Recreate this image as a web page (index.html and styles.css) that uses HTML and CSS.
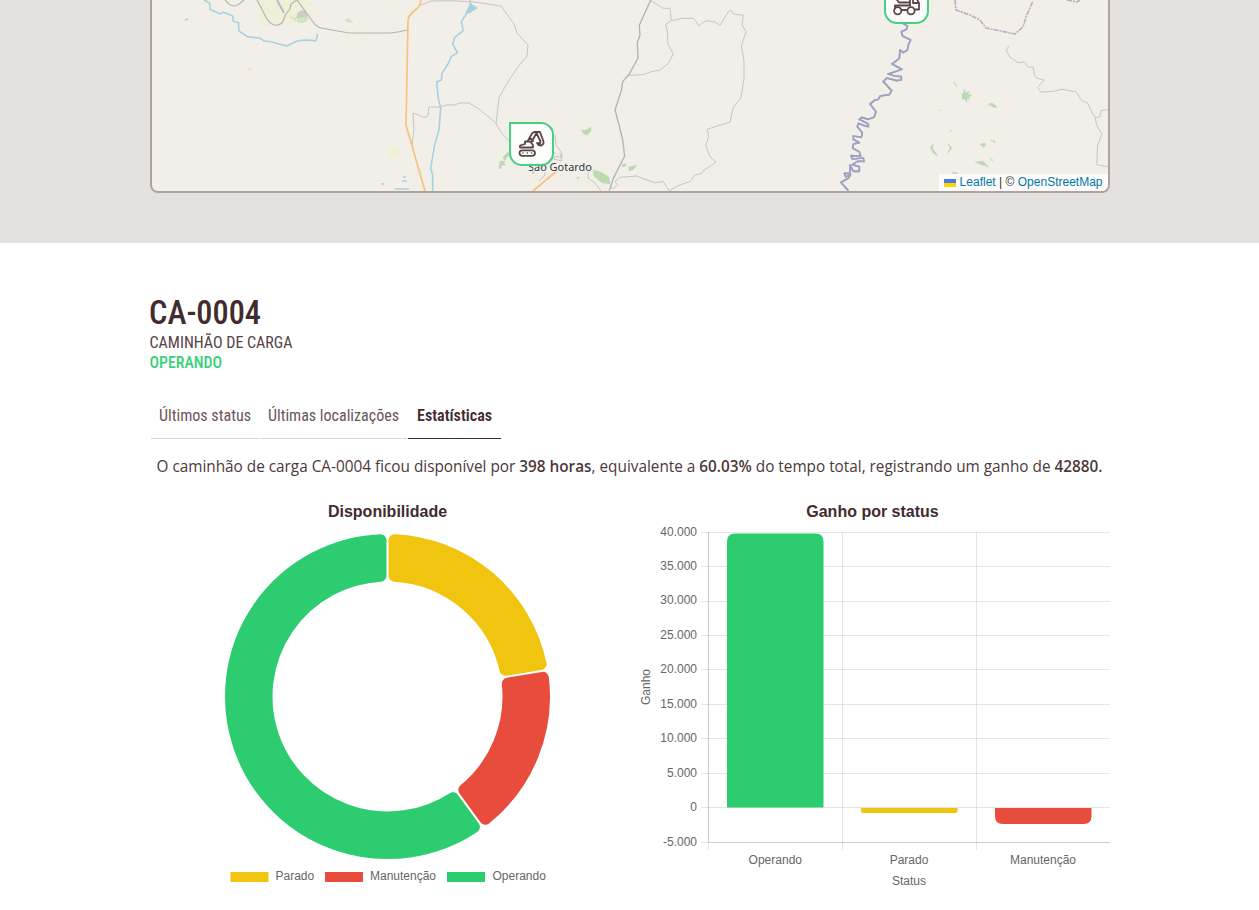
FILE: index.html
```
<!DOCTYPE html>
<html lang="pt-BR">
<head>
<meta charset="utf-8">
<title>CA-0004</title>
<link rel="stylesheet" href="styles.css">
</head>
<body>
<section class="map-section">
  <div class="map">
    <svg class="map-canvas" viewBox="152 0 956 191" width="956" height="191">
      <g class="farm">
        <path d="M258 0l2 18 0 9 8 0 4-8 6 6 13-1 4-6 7 2-2-6 12 4 0-7-4-2 3-9z"/>
        <path d="M341 35h8l5 2-7 2zM358 22l9 0-6 5zM358 33l6 4 4 5-7-2zM383 0h6v2zM308 25l5 1-2 4z"/><circle cx="394" cy="153" r="6"/>
      </g>
      <path class="grey-area" d="M296 18l2-6 5-2 4 4 0 4-8 1z"/>
      <g class="forest light"><path d="M297 18l5-1 6 1-1 3-5 2-4-1zM290 15l2 4 3-2 1 5M345 20l4-1 4 3-6 0z"/></g>
      <path class="peach" d="M248 67l4 2-1 2-2 0zM309 3l3 1-1 2zM275 9l2 2-3 0zM288 5l2-1 0 3z"/>
      <g class="forest">
        <path d="M581 130l5 0 5-3 0 4-4 4-3-1zM503 157l5-5 2 3-4 3 0 2-2 0zM500 161l5 0-1 3 2 1-4 0-1 4-2-1zM593 170l8 2 8 5 1 7-8-1-8-7zM622 165l3-2 1 3-4 1zM629 167l8-2-4 5-4 1zM576 178l3-1 0 2z"/>
        <path d="M953 82l3 2 1 3-2-3zM962 94l2-2 0-3 2 4 3-2-1 3 4 1-3 2 0 3-2-2 0 4-3-3-2 0 0-2zM988 104l4-1 4 3 1 2-4-1zM930 147l3-3 0 5 5 7-5-3zM948 144l4 4-4 5 2-5zM980 144l5-1 1 3-3 1zM991 140l4 1 0 2zM975 162l8-1 6 6-7-2zM990 158l3 2-1 1zM952 172l6 1-4 2zM939 110l2 0-1 1zM950 130l2 1-2 0z"/>
      </g>
      <g class="road">
        <path class="dark" d="M225 0c3 4 5 6 9 6s6-3 10-6M257 0l10 19q7 10 15 4l4-9 4-5 1-5 6-4M297 0l16 22q4 5 8 6l28 5h42q8-1 16-3"/>
        <path d="M421 5l10-4q20-1 43 1l27 4 13 18 3 9 11 12-1 11q-16 18-28 42l-3 26q5 10 14 18M413 113l6 2q5 4 9 1l1-9 10 0 8-2q8 1 13-2l9 0 10 6 17 14M413 113l1 16-2 17M555 135l1 10 6 8 0 5-5-2-7 4M560 153l2 8-8-2M545 169v6l-6 6M588 171l0 7 7 5 6 8M538 138l18 16"/>
        <g class="detail" transform="translate(400 0) scale(.33333)">
          <path d="M752 2L790 25 810 25 814 62 848 55 880 55 888 63 895 78 918 62 945 66 960 76 985 35 992 30 1000 42 1030 46 1026 75 1038 95 1024 138 1032 180 1032 238 1022 295 1000 322 990 366 940 382 922 388 926 410 917 436 930 470 948 486 935 496 912 510 905 520 885 525 870 545 840 555 825 562 808 573 790 545 765 548 735 538 710 528 660 532 645 545 654 555 638 566 630 560M814 62L797 72 803 100 803 130 820 162 805 190 780 210 755 215 728 224 686 226"/>
          <path class="dark" d="M752 0L718 76 720 106 712 128 714 174 688 222 668 245 664 272 645 330 658 378 668 420 674 468 640 535 628 572"/>
        </g>
        <g class="detail" transform="translate(800 0) scale(.33333)">
          <path d="M627 137L619 150 630 172 655 188 675 186 682 200 700 202 703 225 712 235 733 240 713 262 722 276 760 274 785 268 828 275 845 302 862 308 880 345 888 353 900 350 903 332 926 328M885 350L890 375 906 402 893 435 890 494 926 501"/>
        </g>
      </g>
      <path class="motorway" d="M558 170L533 191M421-2q0 9-7 13-6 5-6 10l-2 104 19 66"/>
      <g class="river">
        <g class="detail" transform="translate(140 0) scale(.33333)"><path d="M192 0L210 10 210 28 240 42 250 36 278 48 280 64 296 68 296 92 322 110 362 115 370 122 395 126 440 138 470 124 490 120 528 122 533 102"/></g>
        <g class="detail" transform="translate(400 0) scale(.33333)"><path d="M210 0L212 15 200 40 184 65 190 92 164 112 158 132 172 158 154 170 144 192 126 220 124 240 110 246 115 295 122 325 117 388 103 440 92 505 98 525 98 573"/></g>
        <path d="M185 20l3-1M381 184h3M395 189h14M403 177h3M402 181h5M151 174v6M537 170l-5 3"/>
        <path class="water" d="M470 3l8 5-8 5-5 1z"/>
      </g>
      <g class="winding" transform="translate(800 0) scale(.33333)">
        <path class="glow" id="meander" d="M300 45L308 70 322 78 320 88 304 95 308 108 332 120 326 132 322 150 310 158 300 150 298 175 276 192 300 205 306 208 285 215 264 222 285 228 304 230 304 240 290 242 260 234 250 245 275 272 268 284 240 288 235 298 225 300 210 312 228 335 222 352 205 358 185 352 178 358 205 372 205 380 190 376 175 370 172 380 187 398 184 412 160 408 160 418 178 428 160 432 158 445 178 455 182 468 153 467 157 477 190 474 192 484 172 484 157 494 178 500 178 514 160 514 150 495 150 520 133 520 137 530 152 524 145 535 123 547 145 572"/>
        <use class="core" href="#meander"/>
      </g>
      <path class="boundary" d="M955 0l1 10 14 5 10 5 6 8 15 3 14 3 8-7 3-10 7-16M1067 0l10 2 3-2"/>
      <path class="runway" d="M277 0l7 13"/>
      <text class="city" x="528" y="171" textLength="64">São Gotardo</text>
    </svg>
    <div class="marker excavator">
      <svg viewBox="0 0 28 28" width="28" height="28">
        <path d="M2 17.500v-2l5-1.500V11.500h5l3 3.500v2.500zM9.500 11.500L14 3.500l2-1.500h6l3.500 9.500v2l-2 2-3-.5-1.500-2 3 .5.5-2-4-8.500-5 9M12 8l3 3"/><rect x="1.500" y="20.300" width="15.500" height="5.500" rx="2.700"/><path class="dots" d="M5 23h.1M9.200 23h.1M13.500 23h.1"/>
      </svg>
    </div>
    <div class="marker mixer">
      <svg viewBox="0 0 28 28" width="28" height="28">
        <path d="M2 11l4 5.500h11V10h5l4 7v6.500h-3.500M17 16.500v3H2v3M9 24h4.500M20 12v5h5.500"/><circle cx="4.700" cy="24.700" r="3.600"/><circle cx="18" cy="24.700" r="3.600"/>
      </svg>
    </div>
    <div class="attribution"><svg width="12" height="8" viewBox="0 0 12 8"><path fill="#4c7be1" d="M0 0h12v4H0z"/><path fill="#ffd500" d="M0 4h12v4H0z"/></svg><a>Leaflet</a><span>|</span><span>©</span><a>OpenStreetMap</a></div>
  </div>
</section>
<main class="details">
  <header class="vehicle">
    <svg class="condensed" width="960" height="76">
      <text class="code" x="-1" y="29" textLength="112" lengthAdjust="spacingAndGlyphs">CA-0004</text>
      <text class="kind" x="-.5" y="53" textLength="143" lengthAdjust="spacingAndGlyphs">CAMINHÃO DE CARGA</text>
      <text class="state" x="-.5" y="73" textLength="72.500" lengthAdjust="spacingAndGlyphs">OPERANDO</text>
    </svg>
  </header>
  <nav class="tabs">
    <div class="tab"><svg class="condensed" width="92" height="24"><text x="0" y="17" textLength="92" lengthAdjust="spacingAndGlyphs">Últimos status</text></svg></div>
    <div class="tab"><svg class="condensed" width="131" height="24"><text x="0" y="17" textLength="131" lengthAdjust="spacingAndGlyphs">Últimas localizações</text></svg></div>
    <div class="tab active"><svg class="condensed" width="75" height="24"><text x="0" y="17" textLength="75" lengthAdjust="spacingAndGlyphs">Estatísticas</text></svg></div>
  </nav>
  <svg class="summary" width="960" height="28">
    <text x="6.500" y="18" textLength="946" lengthAdjust="spacingAndGlyphs">O caminhão de carga CA-0004 ficou disponível por <tspan class="strong">398 horas</tspan>, equivalente a <tspan class="strong">60.03%</tspan> do tempo total, registrando um ganho de <tspan class="strong">42880.</tspan></text>
  </svg>
  <div class="charts">
    <svg class="chart" viewBox="150 495 475 400" width="475" height="400">
      <text class="title" x="387.500" y="517">Disponibilidade</text>
      <g class="ring" transform="translate(387.500 696.500)">
        <path class="yellow" d="M7-156.340A156.500 156.500 0 0 1 153.100-32.440L118.030-26.640A121 121 0 0 0 7-120.800Z"/>
        <path class="red" d="M155.380-18.630A156.500 156.500 0 0 1 97.770 122.200L76.830 93.480A121 121 0 0 0 120.320-12.820Z"/>
        <path class="green" d="M86.460 130.440A156.500 156.500 0 1 1-7-156.340L-7-120.800A121 121 0 1 0 65.520 101.730Z"/>
      </g>
      <rect class="yellow" x="230.500" y="872" width="38" height="10"/><text x="275.500" y="880">Parado</text>
      <rect class="red" x="325" y="872" width="38" height="10"/><text x="370" y="880">Manutenção</text>
      <rect class="green" x="447" y="872" width="38" height="10"/><text x="492.500" y="880">Operando</text>
    </svg>
    <svg class="chart" viewBox="635 495 475 400" width="475" height="400">
      <text class="title" x="872.500" y="517">Ganho por status</text>
      <path class="grid" d="M701 532.500h409M701 566.500h409M701 601.500h409M701 635.500h409M701 669.500h409M701 704.500h409M701 738.500h409M701 773.500h409M701 807.500h409M701 842.500h409M708.500 532v318M842.500 532v318M976.500 532v318"/>
      <path class="grid" d="M708.500 532v310M708 842.500h402"/>
      <path class="green" d="M727 807.500V541.500q0-8 8-8h80.500q8 0 8 8v266z"/>
      <path class="yellow" d="M861 808h96.500v3q0 2-2 2h-92.500q-2 0-2-2z"/>
      <path class="red" d="M995 808h96.500v8q0 8-8 8h-80.500q-8 0-8-8z"/>
      <g class="y-labels"><text x="697" y="536">40.000</text><text x="697" y="570">35.000</text><text x="697" y="604">30.000</text><text x="697" y="639">25.000</text><text x="697" y="673">20.000</text><text x="697" y="708">15.000</text><text x="697" y="742">10.000</text><text x="697" y="777">5.000</text><text x="697" y="811">0</text><text x="697" y="846">-5.000</text></g>
      <g class="x-labels"><text x="775.300" y="864">Operando</text><text x="909" y="864">Parado</text><text x="1043" y="864">Manutenção</text><text x="909" y="885">Status</text><text transform="translate(650 687) rotate(-90)">Ganho</text></g>
    </svg>
  </div>
</main>
</body>
</html>
```
FILE: styles.css
```
* { box-sizing: border-box; }
body { margin: 0; height: 910px; overflow: hidden; background: #fff; color: #422b2e; font-family: "Liberation Sans", Arial, sans-serif; }
svg { display: block; }
.map-section { height: 243px; padding: 0 149px 50px 150px; background: #e5e1df; }
.map { position: relative; width: 960px; height: 193px; border: 2px solid #b0a29f; border-top: 0; border-radius: 0 0 8px 8px; overflow: hidden; background: #f2efe9; }
.map-canvas path { fill: none; stroke-linejoin: round; }
.map-canvas .farm path, .map-canvas .farm circle { fill: #eef0d8; }
.map-canvas .grey-area { fill: #cecdca; }
.map-canvas .peach { fill: #f8dfc5; }
.map-canvas .forest path { fill: #bcdab0; stroke: #bcdab0; stroke-width: .4; }
.map-canvas .forest.light path { fill: #d0e6bd; }
.road path { stroke: #c6c5c3; stroke-width: 1; }
.road .dark { stroke: #b4b2b3; stroke-width: 1.2; }
.road .detail path { stroke-width: 3; }
.road .detail .dark { stroke-width: 4; }
.motorway { stroke: #f6c37c; stroke-width: 1.7; }
.river path { stroke: #a6d2df; stroke-width: 1.5; }
.river .detail path { stroke-width: 4.8; }
.map-canvas .river .water { fill: #a6d2df; stroke: none; }
.winding { stroke: #9b98bd; stroke-width: 4; }
.winding path { fill: none; }
.winding .glow { stroke: #9fa2c2; stroke-width: 5; }
.boundary { stroke: #c3adc2; stroke-width: 1.7; stroke-dasharray: 5 1 2 1; }
.runway { stroke: #bab8cb; stroke-width: 2; }
.city { font: 11px "Noto Sans", sans-serif; fill: #333; stroke: #f7f5f1; stroke-width: 2px; paint-order: stroke; }
.marker { position: absolute; width: 45px; height: 44px; border: 2px solid #45d181; border-radius: 0 13px 13px 13px; background: rgba(255,255,255,.85); }
.marker svg { margin: 6px 0 0 7px; fill: none; stroke: #5a464a; stroke-width: 1.8; stroke-linecap: round; stroke-linejoin: round; overflow: visible; }
.dots { stroke-width: 1.5; }
.excavator { left: 357px; top: 122px; }
.mixer { left: 732px; top: -20px; }
.mixer svg { margin-top: 4px; }
.attribution { position: absolute; right: 0; bottom: 0; height: 17px; padding: 0 5.500px 0 5px; display: flex; align-items: center; gap: 3.400px; background: rgba(255,255,255,.8); color: #333; font-size: 12px; line-height: 17px; }
.attribution a { color: #0078a8; }
.details { width: 960px; margin: 0 0 0 150px; padding-top: 52px; }
.vehicle { height: 106px; }
.condensed { overflow: visible; font-family: "Roboto Condensed", Roboto, sans-serif; font-size: 16px; fill: #422b2e; }
.code { font-size: 33px; font-weight: 500; }
.kind { fill: #574347; }
.state { fill: #38d07a; font-weight: 500; }
.tabs { display: flex; gap: 1px; height: 38px; padding-left: .5px; }
.tab { padding: 3px 8px 0; border-bottom: 1px solid #d7d4d4; }
.tab svg { fill: #68565a; }
.tab:nth-child(2) { padding-left: 8.500px; }
.tab.active { padding: 3px 9px 0 8.500px; border-color: #422b2e; }
.active svg { fill: #422b2e; font-weight: 600; }
.summary { margin-top: 15px; font: 16px "Open Sans", "Noto Sans", sans-serif; fill: #4d383b; }
.strong { font-weight: 600; }
.charts { display: flex; gap: 10px; margin-top: 13px; }
.chart { font-size: 12px; fill: #666; }
.title { font-size: 16px; font-weight: 700; fill: #422b2e; text-anchor: middle; }
.yellow { fill: #f1c40f; stroke: #f1c40f; }
.red { fill: #e74c3c; stroke: #e74c3c; }
.green { fill: #2ecc71; stroke: #2ecc71; }
.chart > .yellow, .chart > .red, .chart > .green { stroke: none; }
.ring path { stroke-width: 12; stroke-linejoin: round; }
.grid { stroke: rgba(0,0,0,.1); fill: none; }
.y-labels { text-anchor: end; }
.x-labels { text-anchor: middle; }
```
